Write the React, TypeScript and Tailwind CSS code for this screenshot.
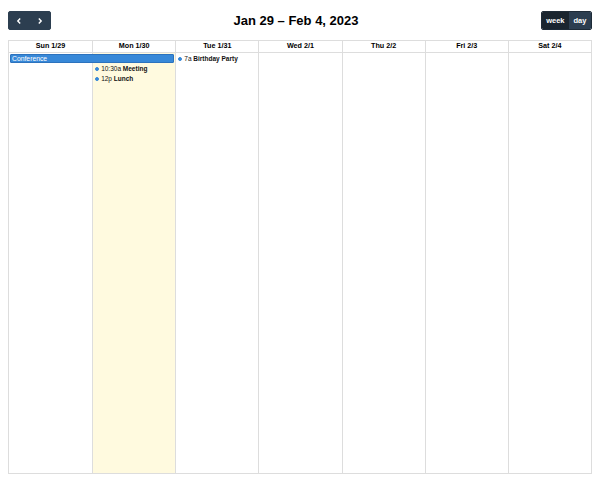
import React from "react";

const days = ["Sun 1/29", "Mon 1/30", "Tue 1/31", "Wed 2/1", "Thu 2/2", "Fri 2/3", "Sat 2/4"];

function Dot() {
  return <span className="inline-block w-[4px] h-[4px] rounded-full bg-[#3788d8] border border-[#3788d8] mr-[2px] shrink-0" />;
}

export default function App() {
  return (
    <div className="w-[600px] h-[486px] bg-white px-[8px] pt-[11px]" style={{ fontFamily: '"Liberation Sans", Arial, sans-serif' }}>
      <div className="flex items-center justify-between h-[19px]">
        <div className="flex h-[19px] w-[43px] rounded-[2px] bg-[#2c3e50] border border-[#2c3e50] text-white">
          <button className="flex-1 flex items-center justify-center">
            <svg width="8" height="8" viewBox="0 0 8 8"><path d="M5.2 1.5 L2.8 4 L5.2 6.5" stroke="white" strokeWidth="1.4" fill="none" /></svg>
          </button>
          <button className="flex-1 flex items-center justify-center">
            <svg width="8" height="8" viewBox="0 0 8 8"><path d="M2.8 1.5 L5.2 4 L2.8 6.5" stroke="white" strokeWidth="1.4" fill="none" /></svg>
          </button>
        </div>
        <div className="text-[13px] font-bold text-black leading-none">Jan 29 – Feb 4, 2023</div>
        <div className="flex h-[19px] w-[51px] rounded-[2px] border border-[#1e2b37] overflow-hidden text-[7.5px] font-bold text-white">
          <div className="bg-[#1a252f] flex-[1.2] flex items-center justify-center">week</div>
          <div className="bg-[#2c3e50] flex-1 flex items-center justify-center">day</div>
        </div>
      </div>
      <div className="mt-[10px] border border-[#ddd] w-[584px]">
        <div className="grid grid-cols-7 h-[12px] border-b border-[#ddd]">
          {days.map((d, i) => (
            <div key={d} className={`flex items-center justify-center text-[7.2px] font-bold text-black ${i > 0 ? "border-l border-[#ddd]" : ""}`}>{d}</div>
          ))}
        </div>
        <div className="grid grid-cols-7 h-[420px] grid-rows-[auto_auto_auto_1fr]">
          {days.map((d, i) => (
            <div
              key={d}
              className={`row-start-1 row-span-4 ${i > 0 ? "border-l border-[#ddd]" : ""} ${i === 1 ? "bg-[#fffadf]" : ""}`}
              style={{ gridColumnStart: i + 1 }}
            />
          ))}
          <div className="row-start-1 col-start-1 col-span-2 mx-[1px] mt-[1px] h-[9px] bg-[#3788d8] border border-[#2c72bd] rounded-[1px] text-white text-[6.8px] leading-[7px] px-[1px] flex items-center">
            Conference
          </div>
          <div className="row-start-1 col-start-3 flex items-center px-[3px] mt-[1px] h-[9px] text-[6.5px] text-[#111]">
            <Dot />
            <span>7a <b>Birthday Party</b></span>
          </div>
          <div className="row-start-2 col-start-2 flex items-center px-[3px] mt-[1px] h-[9px] text-[6.5px] text-[#111]">
            <Dot />
            <span>10:30a <b>Meeting</b></span>
          </div>
          <div className="row-start-3 col-start-2 flex items-center px-[3px] mt-[1px] h-[9px] text-[6.5px] text-[#111]">
            <Dot />
            <span>12p <b>Lunch</b></span>
          </div>
        </div>
      </div>
    </div>
  );
}
